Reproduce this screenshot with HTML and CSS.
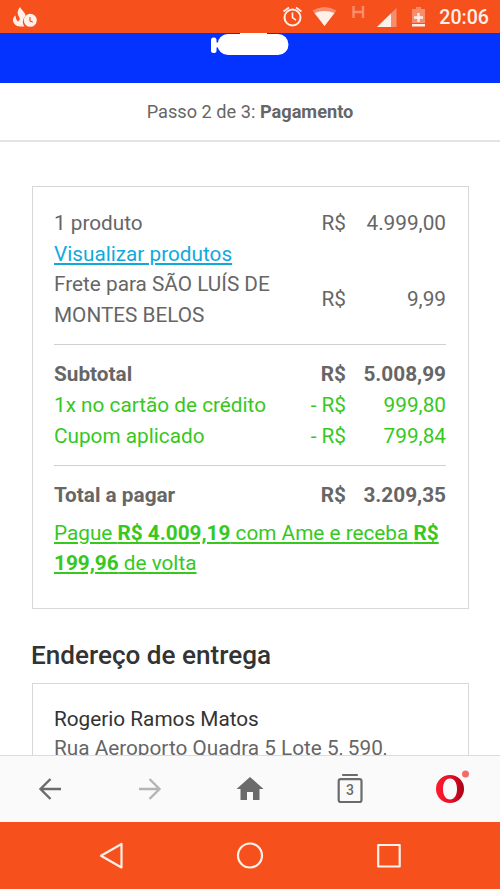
FILE: index.html
```html
<!DOCTYPE html>
<html lang="pt-BR">
<head>
<meta charset="utf-8">
<title>Pagamento</title>
<link rel="stylesheet" href="styles.css">
</head>
<body>
<div class="phone">
  <div class="status">
    <svg class="app-icon" width="26" height="22" viewBox="0 0 26 22">
      <path d="M8 1C9 4 13.500 6 13.500 10C10.500 13 10 17 12.500 20.500H8C4 20.500 1 17.500 1 14C1 12 2 10.500 3.500 9.500C3.500 12 4.500 14 6 15.500C8.500 14 8 12 6.500 10C5 7 5.500 4 8 1Z" fill="#fff0ea"/>
      <circle cx="18.300" cy="14.300" r="6.500" fill="#fff0ea"/>
      <path d="M18 11V14.800L20.800 16.300" fill="none" stroke="#f4511e" stroke-width="1.200"/>
    </svg>
    <svg class="tray" width="150" height="33" viewBox="0 0 150 33">
      <g fill="none" stroke="#fff0ea" stroke-width="2">
        <circle cx="12.500" cy="17.500" r="8"/>
        <path d="M12.500 12.500V17.700L16 20.200M3.500 11.500L9 7.500M16 7.500L21.500 11.500" stroke-width="1.600"/>
      </g>
      <path d="M32.500 10.500Q44.500 3.500 56.500 10.500L44.500 26Z" fill="#fff" opacity=".35"/>
      <path d="M34.500 13Q44.500 9 54.500 13L44.500 26Z" fill="#fff0ea"/>
      <path d="M73.500 6V18M83 6V18M73.500 12H83" stroke="#fff" stroke-width="2.400" opacity=".35"/>
      <path d="M97 27L116.500 8V27Z" fill="#fff" opacity=".35"/>
      <path d="M97 27L111 13.500V27Z" fill="#fff0ea"/>
      <path d="M132 9H136V7H141V9H145V23H132Z" fill="#fff" opacity=".35"/>
      <path d="M132 24H145V26.500H132ZM137.300 13H139.700V16.300H143V18.700H139.700V22H137.300V18.700H134V16.300H137.300Z" fill="#fff0ea"/>
    </svg>
    <span class="clock">20:06</span>
  </div>
  <header class="brand">
    <svg width="80" height="23" viewBox="0 0 80 23"><rect x="1" y="4.500" width="5.500" height="15.500" rx="2.500" fill="#fff"/><rect x="5" y="9.500" width="6" height="5" fill="#fff"/><path d="M18 1H68A10.500 10.500 0 0 1 68 22H18A10.500 10.500 0 0 1 18 1Z" fill="#fff"/><path d="M30 0H57V2H30Z" fill="#fff"/></svg>
  </header>
  <div class="step"><span>Passo 2 de 3: <b>Pagamento</b></span></div>
  <main class="page">
    <section class="card summary">
      <div class="row"><span>1 produto</span><span class="cur">R$</span><span class="val">4.999,00</span></div>
      <div class="row"><a class="link">Visualizar produtos</a></div>
      <div class="row"><span>Frete para SÃO LUÍS DE MONTES BELOS</span><span class="cur">R$</span><span class="val">9,99</span></div>
      <hr>
      <div class="row strong"><span>Subtotal</span><span class="cur">R$</span><span class="val">5.008,99</span></div>
      <div class="row green"><span>1x no cartão de crédito</span><span class="cur">- R$</span><span class="val">999,80</span></div>
      <div class="row green"><span>Cupom aplicado</span><span class="cur">- R$</span><span class="val">799,84</span></div>
      <hr>
      <div class="row strong"><span>Total a pagar</span><span class="cur">R$</span><span class="val">3.209,35</span></div>
      <p class="ame green">Pague <b>R$ 4.009,19</b> com Ame e receba <b>R$ 199,96</b> de volta</p>
    </section>
    <h2>Endereço de entrega</h2>
    <section class="card address">
      <p class="name">Rogerio Ramos Matos</p>
      <p>Rua Aeroporto Quadra 5 Lote 5, 590,</p>
    </section>
  </main>
  <nav class="toolbar">
    <svg width="100" height="66" viewBox="0 0 100 66"><path d="M61 33H41M50.500 23L40.500 33L50.500 43" fill="none" stroke="#6b6b6b" stroke-width="2.400"/></svg>
    <svg width="100" height="66" viewBox="0 0 100 66"><path d="M39 33H59M49.500 23L59.500 33L49.500 43" fill="none" stroke="#b5b5b5" stroke-width="2.400"/></svg>
    <svg width="100" height="66" viewBox="0 0 100 66"><path d="M50 21L63.500 33H59.500V44H53V36H47V44H40.500V33H36.500Z" fill="#6b6b6b"/></svg>
    <svg width="100" height="66" viewBox="0 0 100 66"><path d="M43 19H57" stroke="#6b6b6b" stroke-width="2.200" stroke-linecap="round"/><rect x="38.700" y="23.200" width="22.800" height="22.800" rx="2" fill="none" stroke="#6b6b6b" stroke-width="2.200"/><text x="50" y="39" text-anchor="middle" class="tab-count">3</text></svg>
    <svg width="100" height="66" viewBox="0 0 100 66">
      <defs><linearGradient id="ring" x1="0" x2="1" y1="0" y2="0"><stop offset="0" stop-color="#ff1b2d"/><stop offset=".5" stop-color="#e61228"/><stop offset="1" stop-color="#a70014"/></linearGradient></defs>
      <path fill-rule="evenodd" fill="url(#ring)" d="M50 19A14 14 0 1 1 50 47A14 14 0 1 1 50 19ZM50 22.500C45.500 22.500 43 27 43 33S45.500 43.500 50 43.500S57 39 57 33S54.500 22.500 50 22.500Z"/>
      <circle cx="65.500" cy="18" r="3.500" fill="#f46a68"/>
    </svg>
  </nav>
  <div class="system">
    <svg width="500" height="67" viewBox="0 0 500 67"><g fill="none" stroke="#fff0ea" stroke-width="2.200" stroke-linejoin="round"><path d="M121.500 22V45.500L101 33.800Z"/><circle cx="250" cy="33.500" r="12"/><rect x="378.200" y="23" width="21.500" height="21.500"/></g></svg>
  </div>
</div>
</body>
</html>
```
FILE: styles.css
```css
* { box-sizing: border-box; }
body { margin: 0; font-family: Roboto, sans-serif; color: #666; background: #fff; }
p, h2 { margin: 0; }
b { font-weight: 700; }
.phone { width: 500px; height: 889px; display: flex; flex-direction: column; overflow: hidden; }
.phone > * { flex: none; }
svg { display: block; }
.status { height: 33px; background: #f6511d; display: flex; align-items: center; padding: 0 11px 0 12px; }
.tray { margin-left: auto; }
.clock { color: #fff0ea; font-size: 19.6px; font-weight: 500; line-height: 33px; width: 50px; margin-left: 9px; padding-top: 1px; text-align: right; white-space: nowrap; }
.brand { height: 50px; background: #0433ff; display: flex; justify-content: center; }
.step { height: 59px; border-bottom: 2px solid #e3e3e3; display: flex; align-items: center; justify-content: center; font-size: 18.2px; }
.phone > .page { flex: 1 1 0; min-height: 0; overflow: hidden; padding: 44px 31px 0 32px; font-size: 20.75px; line-height: 30.6px; }
.card { border: 1px solid #d8d8d8; padding: 21px; }
.summary { height: 423px; padding-right: 22px; }
.row { display: grid; grid-template-columns: 1fr 50px 100px; align-items: center; }
.row > :first-child { padding-right: 10px; white-space: normal; }
.cur, .val { text-align: right; white-space: nowrap; }
.link { color: #11a9dc; text-decoration: underline; grid-column: 1 / 3; }
.strong { font-weight: 700; }
.green { color: #36c81e; }
hr { border: 0; border-top: 1px solid #d0d0d0; margin: 14px 0; }
.ame { text-decoration: underline; padding-top: 7px; }
h2 { font-size: 26.1px; line-height: 36px; font-weight: 500; color: #333; margin: 28px 0 10px -1px; }
.address { height: 160px; line-height: 29.3px; }
.name { color: #333; }
.toolbar { height: 67px; background: #fafafa; border-top: 1px solid #dcdcdc; display: flex; }
.tab-count { font-size: 14px; font-weight: 500; fill: #6b6b6b; }
.system { height: 67px; background: #f6511d; }
```
